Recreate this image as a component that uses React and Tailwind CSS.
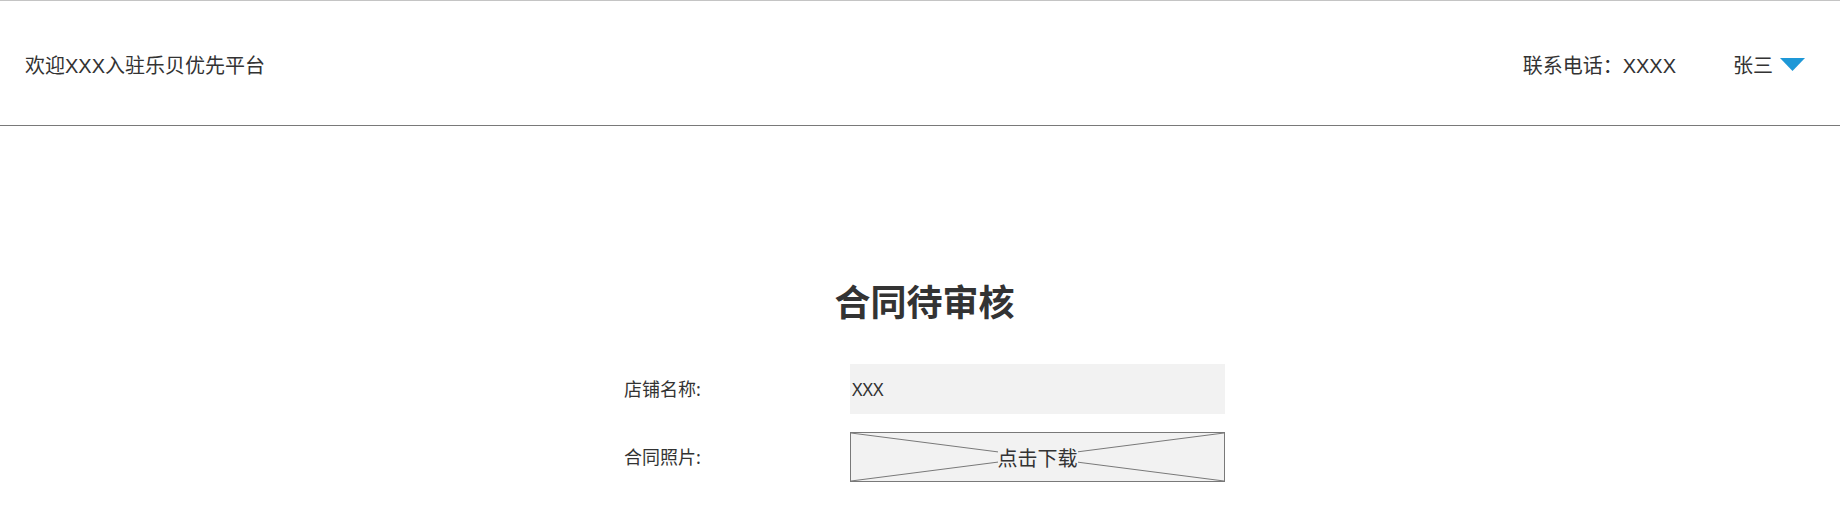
export default function App() {
  return (
    <div className="min-h-screen bg-white font-['Noto_Sans','Noto_Sans_CJK_SC',sans-serif] text-[#333333]">
      {/* top bar */}
      <header className="flex items-center justify-between h-[126px] border-t border-b border-t-[#c4c4c4] border-b-[#797979] pl-[25px] pr-[35px] pt-[5px] text-[20px] font-['Liberation_Sans','Noto_Sans_CJK_SC',sans-serif]">
        <div>欢迎XXX入驻乐贝优先平台</div>
        <div className="flex items-center">
          <span>联系电话：XXXX</span>
          <span className="ml-[57px]">张三</span>
          <svg className="ml-[7px] mb-[3px]" width="25" height="13" viewBox="0 0 25 13">
            <polygon points="0,0 25,0 12.5,13" fill="#1e98d7" />
          </svg>
        </div>
      </header>

      <main className="mx-auto w-[610px] pl-[9px] pt-[158px]">
        <h1 className="text-center text-[36px] leading-[37px] font-bold">合同待审核</h1>

        <div className="mt-[43px] flex flex-col gap-[18px] text-[18px]">
          <div className="flex items-center">
            <label className="w-[226px]">店铺名称:</label>
            <div className="w-[375px] h-[50px] bg-[#f2f2f2] flex items-center pl-[2px]">XXX</div>
          </div>
          <div className="flex items-center">
            <label className="w-[226px]">合同照片:</label>
            <div className="relative w-[375px] h-[50px] bg-[#f2f2f2] border border-[#797979] flex items-center justify-center cursor-pointer">
              <svg className="absolute inset-0 w-full h-full" viewBox="0 0 373 48" preserveAspectRatio="none">
                <line x1="0" y1="0" x2="373" y2="48" stroke="#797979" strokeWidth="1" />
                <line x1="373" y1="0" x2="0" y2="48" stroke="#797979" strokeWidth="1" />
              </svg>
              <span className="relative bg-[#f2f2f2] text-[20px] leading-[22px] mt-[4px]">点击下载</span>
            </div>
          </div>
        </div>
      </main>
    </div>
  );
}
